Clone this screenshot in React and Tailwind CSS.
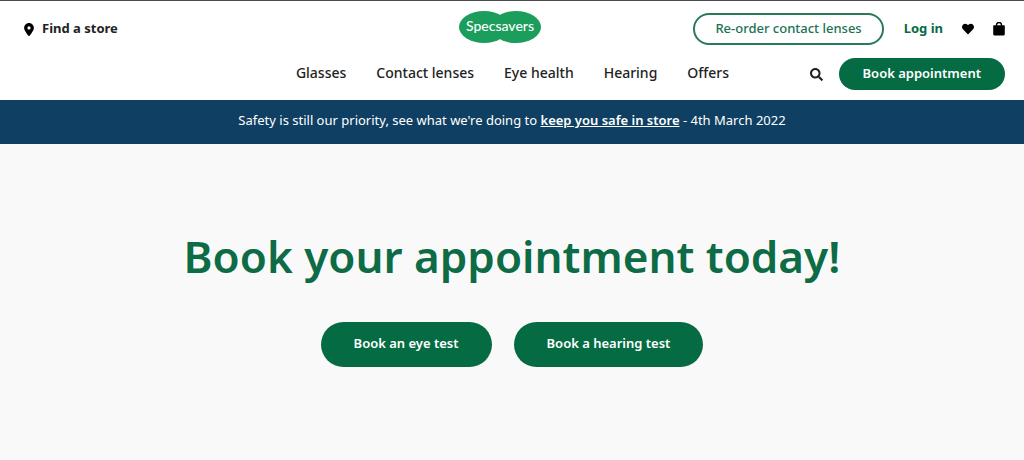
import { FaHeart, FaSearch } from 'react-icons/fa';
import { FaLocationDot } from 'react-icons/fa6';

const NAV_LINKS = [
  { name: 'Glasses', path: '#glasses' },
  { name: 'Contact lenses', path: '#contact-lenses' },
  { name: 'Eye health', path: '#eye-health' },
  { name: 'Hearing', path: '#hearing' },
  { name: 'Offers', path: '#offers' },
];

const BOOKINGS = ['Book an eye test', 'Book a hearing test'];

function Logo() {
  return (
    <svg width="82" height="32" viewBox="0 0 82 32" role="img" aria-label="Specsavers">
      <ellipse cx="25" cy="16" rx="25" ry="16" fill="#1b9d5c" />
      <ellipse cx="57" cy="16" rx="25" ry="16" fill="#1b9d5c" />
      <text x="41" y="20" textAnchor="middle" fill="#ffffff" className="font-['Lato',sans-serif] text-[14px] font-medium">
        Specsavers
      </text>
    </svg>
  );
}

function BagIcon() {
  return (
    <svg width="12" height="14" viewBox="0 0 12 14" aria-hidden="true">
      <path d="M3.5 4.5V3a2.5 2.5 0 0 1 5 0v1.5" fill="none" stroke="#000" strokeWidth="1.4" />
      <path d="M1 3.2h10q.8 0 .8.8v8q0 1.5-1.5 1.5H1.7Q.2 13.5.2 12V4q0-.8.8-.8z" fill="#000" />
    </svg>
  );
}

function Header() {
  return (
    <header className="border-t border-[#4b4b4f] bg-white pt-3 pb-2.5 pl-5 pr-[19px] flex flex-col gap-[13px]">
      <div className="grid grid-cols-[1fr_auto_1fr] items-center h-8">
        <a href="#stores" className="flex items-center gap-2 pl-1 text-[13px] font-bold">
          <FaLocationDot size={13} className="w-[10px] text-black" />
          Find a store
        </a>
        <a href="#home" className="mr-[26px] self-start -mt-0.5">
          <Logo />
        </a>
        <div className="flex items-center justify-end">
          <button className="h-8 px-5 mr-5 rounded-full border-2 border-[#2a7a58] text-[#1a7350] text-[13px] font-medium whitespace-nowrap">
            Re-order contact lenses
          </button>
          <a href="#login" className="mr-[19px] text-[13px] font-bold text-[#046b42] whitespace-nowrap">Log in</a>
          <button aria-label="Favourites" className="mr-[19px] text-black">
            <FaHeart size={12} />
          </button>
          <button aria-label="Basket">
            <BagIcon />
          </button>
        </div>
      </div>

      <div className="grid grid-cols-[1fr_auto_1fr] items-center h-8">
        <nav className="col-start-2 flex gap-[30px] pb-0.5">
          {NAV_LINKS.map((link) => (
            <a key={link.name} href={link.path} className="text-[14px] leading-5 font-medium whitespace-nowrap">
              {link.name}
            </a>
          ))}
        </nav>
        <div className="flex items-center justify-end gap-4">
          <button aria-label="Search">
            <FaSearch size={13} />
          </button>
          <button className="h-8 px-6 rounded-full bg-[#046b42] text-white text-[13px] font-semibold whitespace-nowrap">
            Book appointment
          </button>
        </div>
      </div>
    </header>
  );
}

export default function App() {
  return (
    <div className="min-h-screen flex flex-col bg-[#f9f9f9] font-['Noto_Sans',sans-serif] text-[#222222]">
      <Header />

      {/* Notice */}
      <p className="bg-[#0f3f62] text-white text-center text-[13px] leading-5 pt-2.5 pb-3.5">
        Safety is still our priority, see what we're doing to{' '}
        <a href="#safety" className="font-semibold underline">keep you safe in store</a> - 4th March 2022
      </p>

      {/* Hero */}
      <main className="flex flex-col items-center pt-[82px] text-center">
        <h1 className="text-[44px] leading-[60px] font-semibold text-[#0d6b46]">Book your appointment today!</h1>
        <div className="mt-9 flex gap-[22px]">
          {BOOKINGS.map((label) => (
            <button key={label} className="h-[45px] px-[33px] pb-0.5 rounded-full bg-[#046b42] text-white text-[13px] font-semibold">
              {label}
            </button>
          ))}
        </div>
      </main>
    </div>
  );
}
